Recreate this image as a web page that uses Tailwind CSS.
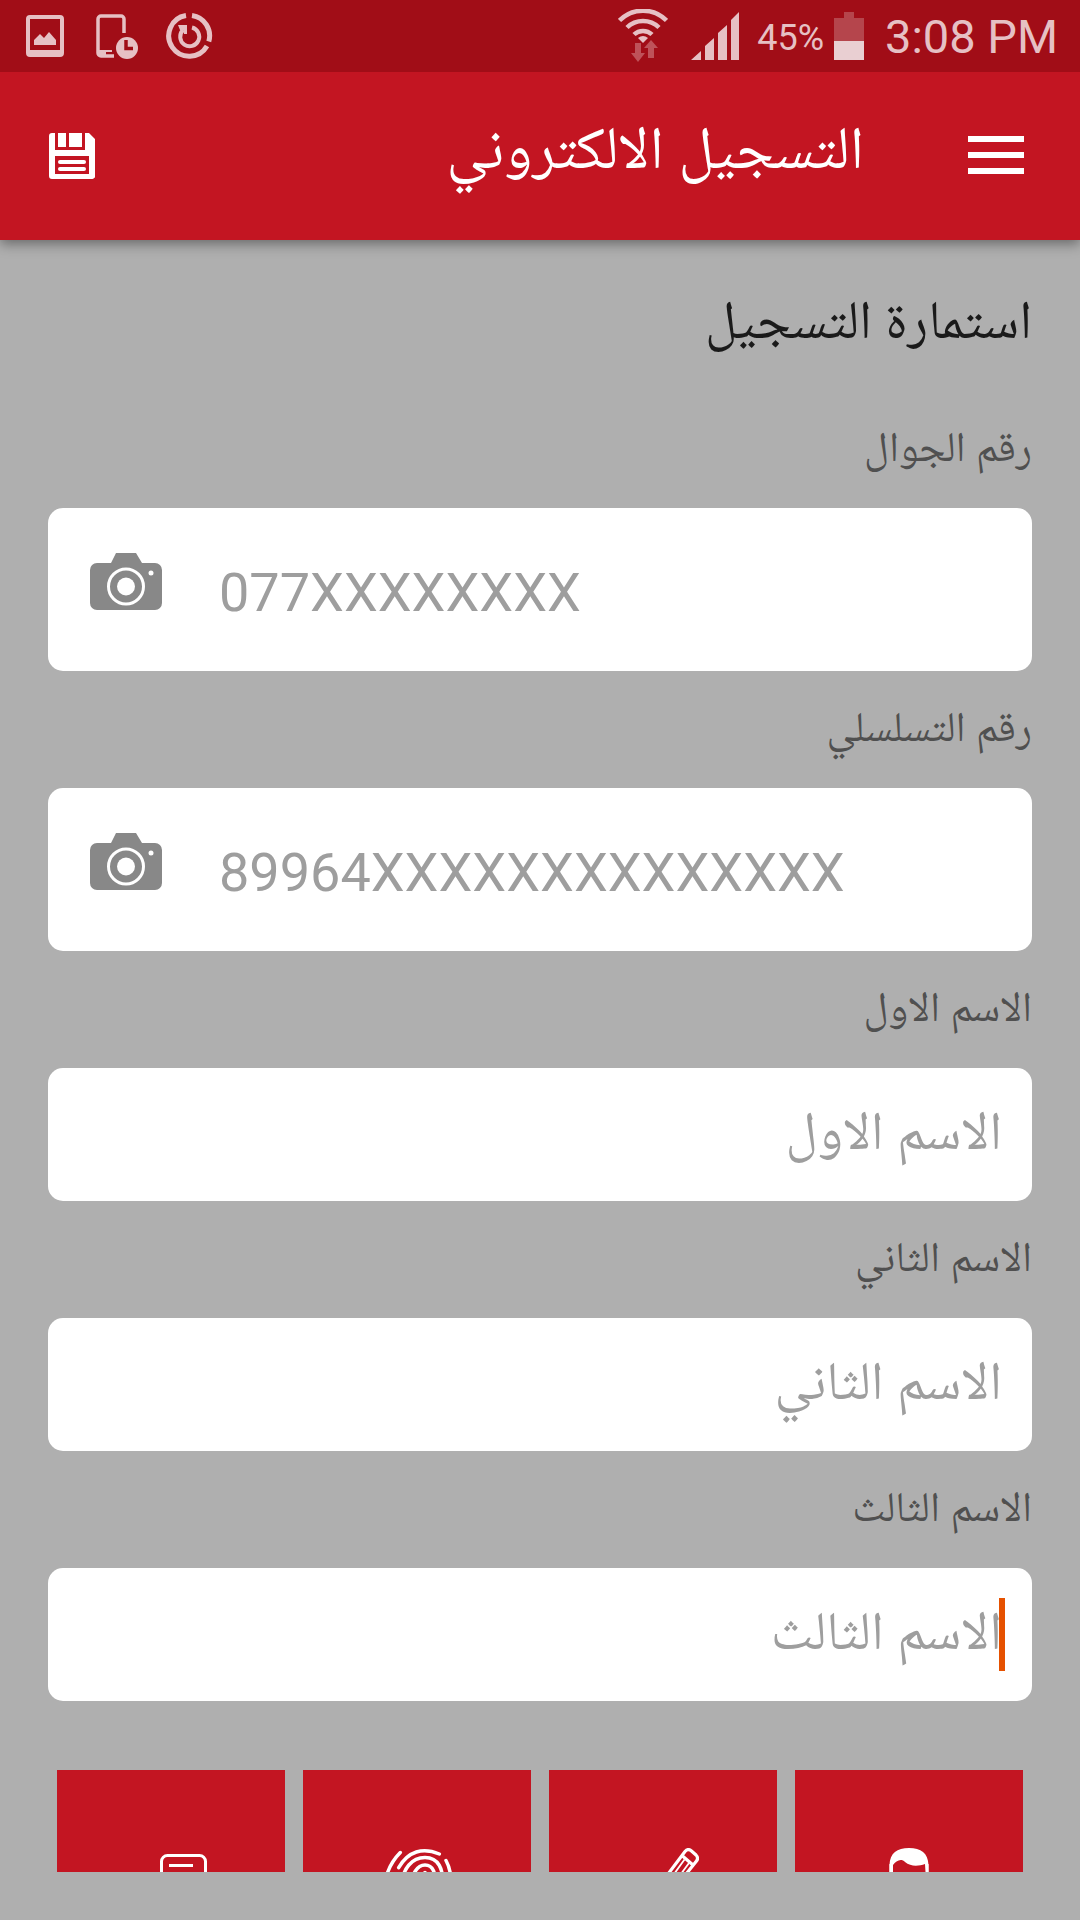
<!DOCTYPE html>
<html lang="ar" dir="rtl">
<head>
    <meta charset="UTF-8">
    <meta name="viewport" content="width=device-width, initial-scale=1.0">
    <title>التسجيل الالكتروني</title>
    <script src="https://cdn.jsdelivr.net/npm/@tailwindcss/browser@4"></script>
</head>
<body class="h-screen flex flex-col overflow-hidden bg-[#afafaf] text-[#1a1a1a] font-['Roboto','Noto_Naskh_Arabic','DejaVu_Sans',sans-serif]">
    <!-- Status bar -->
    <div dir="ltr" class="relative z-20 h-[72px] shrink-0 flex items-center justify-between bg-[#a10d17] text-[#e6c0c4] pl-6 pr-[22px]">
        <div class="flex items-center gap-7">
            <svg class="w-[42px] h-12" viewBox="0 0 42 48" fill="none">
                <path d="M6 3h30a4 4 0 0 1 4 4v34a4 4 0 0 1-4 4H6a4 4 0 0 1-4-4V7a4 4 0 0 1 4-4zM6 7v31h30V7z" fill="currentColor" fill-rule="evenodd"/>
                <path d="M10 33v-5l6-6 4 4 5-6 7 8v5z" fill="currentColor"/>
            </svg>
            <svg class="w-[44px] h-12" viewBox="0 0 44 48" fill="none">
                <path d="M30 21V7a3 3 0 0 0-3-3H7a3 3 0 0 0-3 3v34a3 3 0 0 0 3 3h13" stroke="currentColor" stroke-width="3.5"/>
                <path d="M4 38h14v2h-6v3h8v2H5z" fill="currentColor"/>
                <circle cx="33" cy="36" r="11" fill="currentColor"/>
                <path d="M32 28v8.500h7" stroke="#a10d17" stroke-width="3.500"/>
            </svg>
            <svg class="w-12 h-12" viewBox="1 0 48 48" fill="none" stroke="currentColor">
                <path d="M27 3.500A20.500 20.500 0 0 1 43.800 29.500M42 34A20.500 20.500 0 1 1 21 3.500" stroke-width="5"/>
                <path d="M27 15.500a9.500 9.500 0 1 1-9 2.500" stroke-width="4"/>
                <path d="M13 13h9v9h-3v-3l-4-1z" fill="currentColor" stroke="none"/>
            </svg>
        </div>
        <div class="flex items-center">
            <svg class="w-[50px] h-[54px]" viewBox="0 0 50 54" fill="none" stroke="currentColor">
                <path d="M1.500 11.500a33 33 0 0 1 47 0" stroke-width="4.500"/>
                <path d="M9 18.500a23 23 0 0 1 32 0" stroke-width="4.500"/>
                <path d="M16 25.500a13 13 0 0 1 18 0" stroke-width="4.500"/>
                <path d="M20 29q5-4 10 0l-5 5z" fill="currentColor" stroke="none"/>
                <path d="M17 34h6v10h4l-7 9-7-9h4zM30 49V39h-4l7-8 7 8h-4v10z" fill="#be5259" stroke="none"/>
            </svg>
            <svg class="w-12 h-12 ml-[23px]" viewBox="0 0 48 48" fill="currentColor">
                <path d="M0 48l10-9v9zM14 48V34l9-8v22zM27 48V21l9-8v35zM40 48V8l8-8v48z"/>
            </svg>
            <span class="text-[36px] ml-[18px] pt-1">45%</span>
            <svg class="w-[30px] h-12 ml-[10px]" viewBox="0 0 30 48">
                <path d="M10 0h10v6h10v24H0V6h10z" fill="#b5454c"/>
                <path d="M0 29h30v19H0z" fill="#e9cfd2"/>
            </svg>
            <span class="text-[47px] ml-[21px] pt-0.5">3:08 PM</span>
        </div>
    </div>

    <!-- App bar -->
    <header class="relative z-10 h-[168px] shrink-0 flex items-center bg-[#c31522] text-white pr-12 pl-[49px] shadow-[0_4px_12px_rgba(0,0,0,0.4)]">
        <button type="button" aria-label="القائمة" class="mr-2 mb-0.5">
            <svg class="w-14 h-[38px]" viewBox="0 0 56 38" fill="currentColor"><path d="M0 0h56v6H0zM0 16h56v6H0zM0 32h56v6H0z"/></svg>
        </button>
        <h1 class="flex-1 mr-[104px] pb-4 text-[60px] leading-[72px]">التسجيل الالكتروني</h1>
        <button type="button" aria-label="حفظ">
            <svg class="w-[46px] h-[46px]" viewBox="0 0 46 46" fill="currentColor">
                <path d="M3 0h3v17h30V0h4l6 6v36a3 3 0 0 1-3 4H3a3 3 0 0 1-3-3V3a3 3 0 0 1 3-3zM6 23v18h34V23z" fill-rule="evenodd"/>
                <path d="M9 0h8v14H9zM20 0h13v14H20z"/>
                <rect x="9" y="27" width="28" height="4" rx="2"/>
                <rect x="9" y="34" width="28" height="4" rx="2"/>
            </svg>
        </button>
    </header>

    <main class="flex-1 min-h-0 mb-12 px-12 overflow-y-auto [scrollbar-width:none]">
        <h2 class="pt-11 h-[151px] text-[54px] leading-[72px]">استمارة التسجيل</h2>
        <form id="registerForm" action="#" method="POST">
            <label for="mobile" class="block h-[117px] pt-7 text-[42px] leading-[56px] text-[#505050]">رقم الجوال</label>
            <div dir="ltr" class="h-[163px] flex items-center bg-white rounded-[15px] pl-[42px] pr-8">
                <button type="button" aria-label="تصوير رقم الجوال" class="mb-4 text-[#888888]">
                    <svg class="w-[72px] h-[57px]" viewBox="0 0 72 57">
                        <path d="M26 0h20l6 10h13a7 7 0 0 1 7 7v33a7 7 0 0 1-7 7H7a7 7 0 0 1-7-7V17a7 7 0 0 1 7-7h14z" fill="currentColor"/>
                        <circle cx="36" cy="33.500" r="17.500" fill="none" stroke="#fff" stroke-width="3"/>
                        <circle cx="36" cy="33.500" r="9" fill="#fff"/>
                        <circle cx="61" cy="20" r="2.500" fill="#fff"/>
                    </svg>
                </button>
                <input type="tel" id="mobile" name="mobile" placeholder="077XXXXXXXX" class="flex-1 min-w-0 ml-[57px] pt-1.5 text-[54px] leading-[72px] placeholder:text-[#9e9e9e] focus:outline-none">
            </div>

            <label for="serial" class="block h-[117px] pt-7 text-[42px] leading-[56px] text-[#505050]">رقم التسلسلي</label>
            <div dir="ltr" class="h-[163px] flex items-center bg-white rounded-[15px] pl-[42px] pr-8">
                <button type="button" aria-label="تصوير الرقم التسلسلي" class="mb-4 text-[#888888]">
                    <svg class="w-[72px] h-[57px]" viewBox="0 0 72 57">
                        <path d="M26 0h20l6 10h13a7 7 0 0 1 7 7v33a7 7 0 0 1-7 7H7a7 7 0 0 1-7-7V17a7 7 0 0 1 7-7h14z" fill="currentColor"/>
                        <circle cx="36" cy="33.500" r="17.500" fill="none" stroke="#fff" stroke-width="3"/>
                        <circle cx="36" cy="33.500" r="9" fill="#fff"/>
                        <circle cx="61" cy="20" r="2.500" fill="#fff"/>
                    </svg>
                </button>
                <input type="text" id="serial" name="serial" placeholder="89964XXXXXXXXXXXXXX" class="flex-1 min-w-0 ml-[57px] pt-1.5 text-[54px] leading-[72px] placeholder:text-[#9e9e9e] focus:outline-none">
            </div>

            <label for="firstName" class="block h-[117px] pt-7 text-[42px] leading-[56px] text-[#505050]">الاسم الاول</label>
            <input type="text" id="firstName" name="firstName" placeholder="الاسم الاول" class="block w-full h-[133px] bg-white rounded-[15px] px-[30px] pb-2 text-[54px] placeholder:text-[#9e9e9e] focus:outline-none">

            <label for="secondName" class="block h-[117px] pt-7 text-[42px] leading-[56px] text-[#505050]">الاسم الثاني</label>
            <input type="text" id="secondName" name="secondName" placeholder="الاسم الثاني" class="block w-full h-[133px] bg-white rounded-[15px] px-[30px] pb-2 text-[54px] placeholder:text-[#9e9e9e] focus:outline-none">

            <label for="thirdName" class="block h-[117px] pt-7 text-[42px] leading-[56px] text-[#505050]">الاسم الثالث</label>
            <div class="relative">
                <input type="text" id="thirdName" name="thirdName" placeholder="الاسم الثالث" class="block w-full h-[133px] bg-white rounded-[15px] px-[30px] pb-2 text-[54px] placeholder:text-[#9e9e9e] focus:outline-none">
                <span class="absolute right-[27px] top-[30px] w-[6px] h-[73px] bg-[#e65100]"></span>
            </div>

            <!-- Attachments -->
            <div class="mt-[69px] px-[9px] grid grid-cols-4 gap-[18px] text-white">
                <button type="button" aria-label="الصورة الشخصية" class="h-[228px] flex justify-center pt-[78px] bg-[#c31522]">
                    <svg class="w-[72px] h-[72px]" viewBox="0 0 72 72" fill="none" stroke="currentColor" stroke-width="3">
                        <path d="M18 16v20a18 18 0 0 0 36 0V16"/>
                        <path d="M16.500 24V17C17 5 24 0 36 0s19 5 19.500 17v7H53l-1-8c-6 2-14 3-20-2-4-4-9-1-12 3v7z" fill="currentColor" stroke="none"/>
                        <path d="M6 72c0-12 12-16 24-18h12c12 2 24 6 24 18"/>
                    </svg>
                </button>
                <button type="button" aria-label="التوقيع" class="h-[228px] flex justify-center pt-[78px] bg-[#c31522]">
                    <svg class="w-[72px] h-[72px]" viewBox="0 0 72 72" fill="none" stroke="currentColor">
                        <path d="M20 62V54L58 3.500q3-3.500 6.500-.5l4.500 4q2.800 3 .5 6L32 60zM55.500 8l10.500 9" stroke-width="3.200"/>
                        <path d="M24 58L57.500 11.500M29 60L62 15" stroke-width="1.800"/>
                    </svg>
                </button>
                <button type="button" aria-label="البصمة" class="h-[228px] flex justify-center pt-[78px] bg-[#c31522]">
                    <svg class="w-[72px] h-[72px]" viewBox="0 0 72 72" fill="none" stroke="currentColor" stroke-width="3.500" stroke-linecap="round">
                        <path d="M4 36Q6 18 19.300 4.500M17.700 19.700C27 3 42-1 58.300 6M65 12.500q5 9 5 22"/>
                        <path d="M20 52V38C22 20 31 9.500 44 9.500S63 20 61.700 40L58 58"/>
                        <path d="M30 60V38c1-12 6-21 14-21s11 8 10 20l-4 26"/>
                        <path d="M44 24.500q-4 4-4 13V62"/>
                    </svg>
                </button>
                <button type="button" aria-label="المستمسكات" class="h-[228px] flex justify-center pt-[78px] bg-[#c31522]">
                    <svg class="w-[72px] h-[72px]" viewBox="0 0 72 72" fill="none" stroke="currentColor" stroke-width="3">
                        <rect x="26.500" y="7.500" width="44" height="56" rx="6"/>
                        <path d="M34 17.500h24M34 28h28M34 38h28"/>
                    </svg>
                </button>
            </div>
        </form>
    </main>
</body>
</html>
